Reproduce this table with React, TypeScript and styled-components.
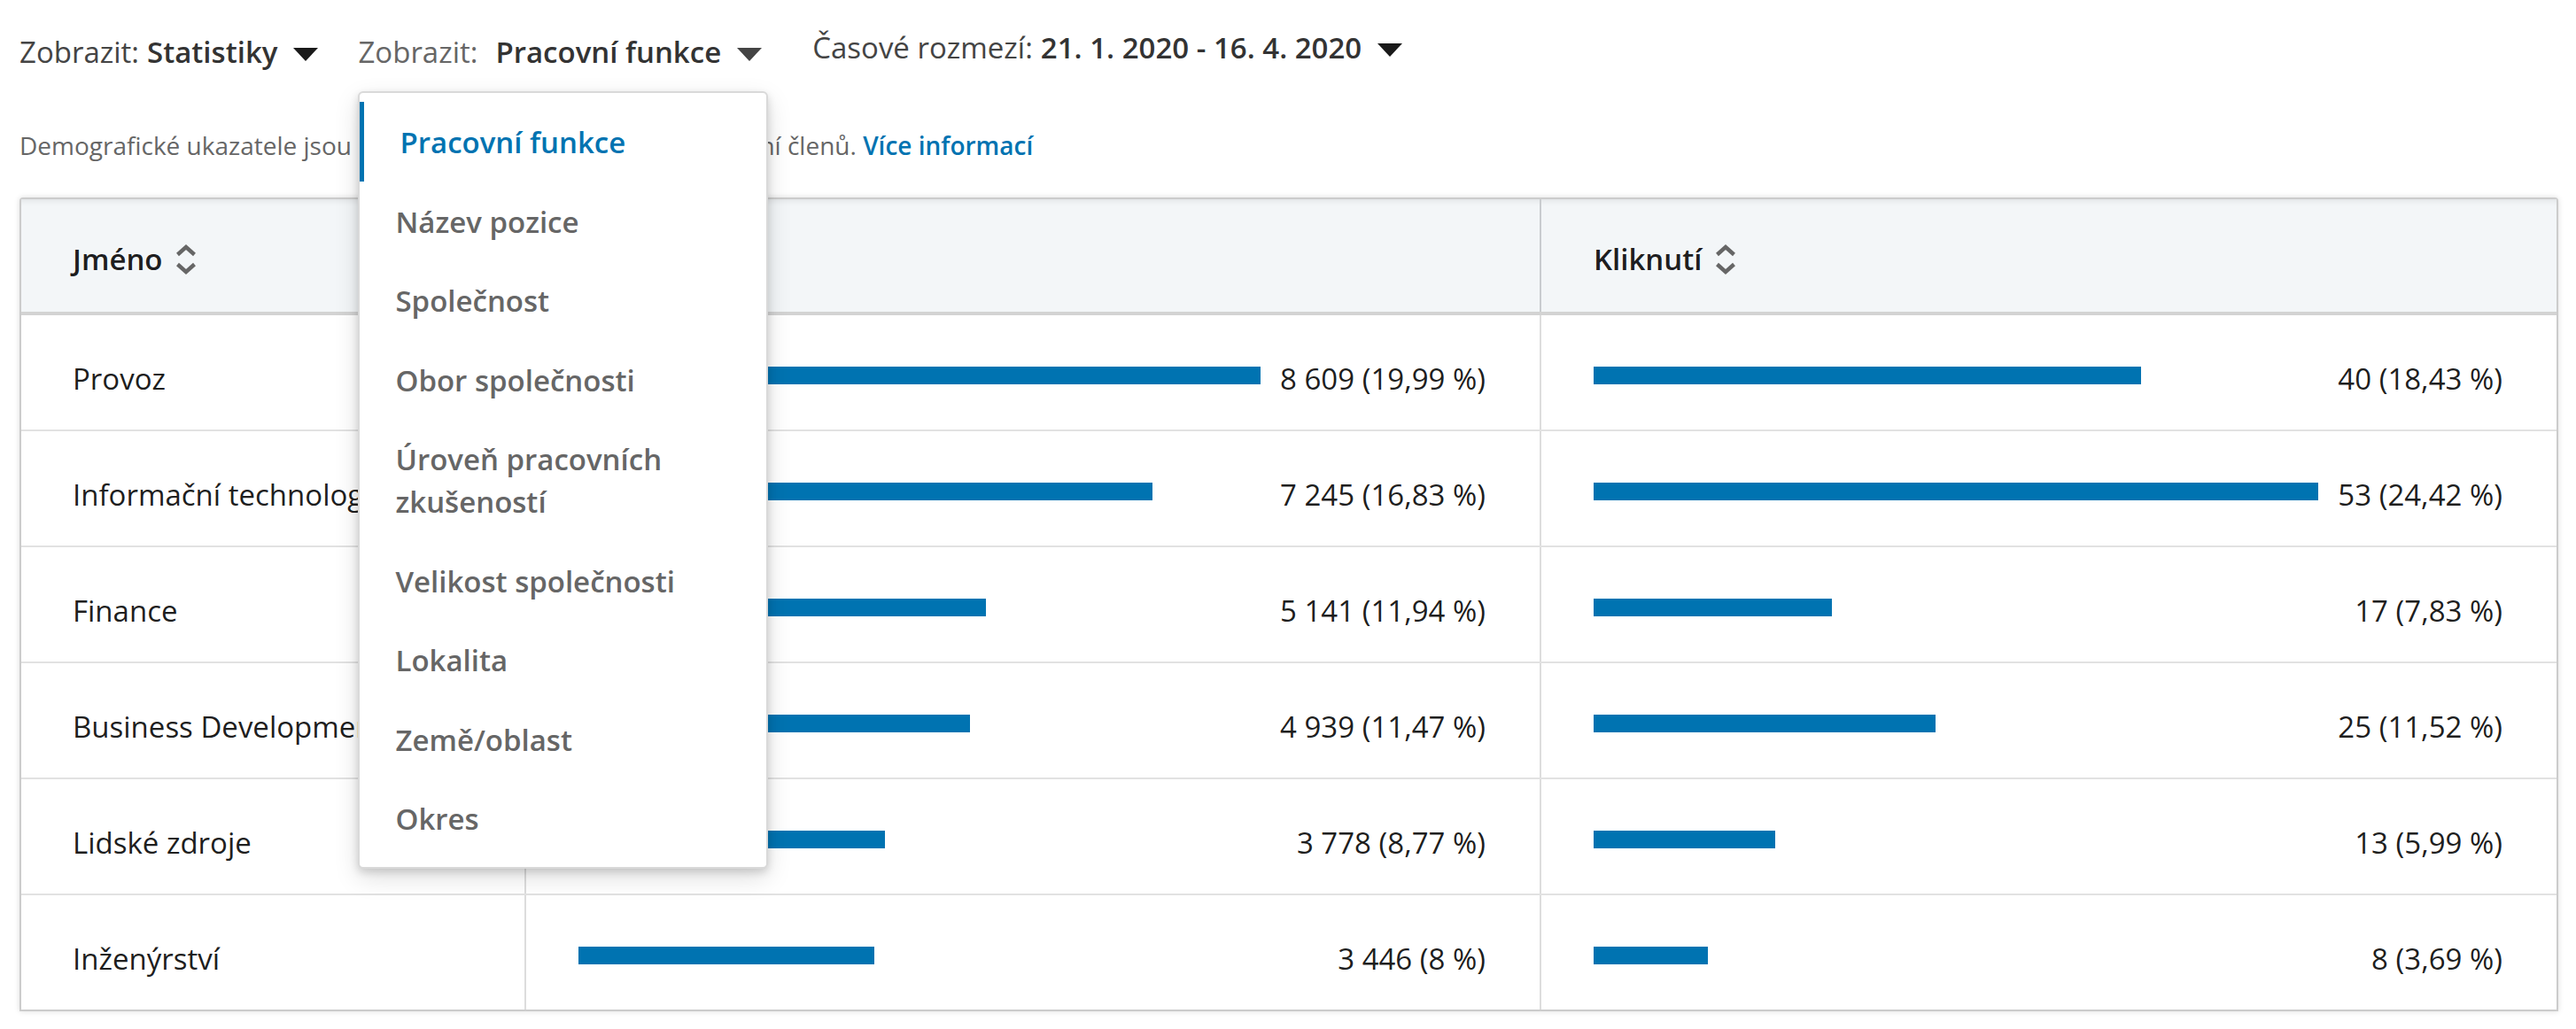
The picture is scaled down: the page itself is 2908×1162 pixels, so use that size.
import React from "react";
import styled, { createGlobalStyle } from "styled-components";

const GlobalStyle = createGlobalStyle`
  html, body { margin: 0; padding: 0; background: #ffffff; }
  body {
    font-family: "Open Sans", "Noto Sans", sans-serif;
    color: rgba(0, 0, 0, 0.9);
    -webkit-font-smoothing: antialiased;
  }
  * { box-sizing: border-box; }
`;

const BLUE = "#0073b1";

const Page = styled.div`
  width: 2908px;
  height: 1162px;
  overflow: hidden;
  padding: 36px 20px 0 22px;
`;

const FilterBar = styled.div`
  display: flex;
  align-items: flex-start;
  gap: 45px;
  height: 46px;
`;

const Filter = styled.div<{ $shift?: number; $raise?: number }>`
  position: relative;
  display: flex;
  align-items: center;
  font-size: 33px;
  line-height: 46px;
  white-space: nowrap;
  margin-left: ${(p) => p.$shift ?? 0}px;
  margin-top: ${(p) => -(p.$raise ?? 0)}px;
  cursor: pointer;
`;

const FilterLabel = styled.span<{ $color: string }>`
  color: ${(p) => p.$color};
  font-weight: 400;
`;

const FilterValue = styled.span<{ $gap: number }>`
  color: #333333;
  font-weight: 600;
  margin-left: ${(p) => p.$gap}px;
`;

const Caret = styled.span<{ $color: string }>`
  display: inline-block;
  width: 0;
  height: 0;
  margin-left: 18px;
  margin-top: 5px;
  border-left: 14px solid transparent;
  border-right: 14px solid transparent;
  border-top: 15px solid ${(p) => p.$color};
`;

const Menu = styled.div`
  position: absolute;
  left: 0;
  top: 67px;
  z-index: 10;
  width: 463px;
  padding: 10px 0;
  background: #ffffff;
  border: 2px solid #d9d9d9;
  border-radius: 6px;
  box-shadow: 0 4px 10px rgba(0, 0, 0, 0.15), 0 10px 28px rgba(0, 0, 0, 0.13);
  white-space: normal;
  cursor: default;
`;

const MenuItem = styled.div<{ $active?: boolean }>`
  font-size: 33px;
  line-height: 48px;
  font-weight: 600;
  padding: 22px 20px 19.5px 40px;
  color: ${(p) => (p.$active ? BLUE : "#666666")};
  border-left: ${(p) => (p.$active ? `5px solid ${BLUE}` : "0 solid transparent")};
`;

const Description = styled.p`
  margin: 62px 0 0 0;
  font-size: 28px;
  line-height: 40px;
  color: #666666;
  white-space: nowrap;
`;

const Link = styled.a`
  color: ${BLUE};
  font-weight: 600;
  text-decoration: none;
`;

const Table = styled.div`
  margin-top: 39px;
  width: 2866px;
  border: 2px solid #cccccc;
  border-radius: 4px 4px 0 0;
  box-shadow: 0 0 6px rgba(0, 0, 0, 0.14);
  background: #ffffff;
`;

const Row = styled.div<{ $head?: boolean; $last?: boolean }>`
  display: grid;
  grid-template-columns: 570px 1146px 1146px;
  height: ${(p) => (p.$head ? 131 : p.$last ? 129 : 131)}px;
  background: ${(p) => (p.$head ? "#f3f6f8" : "#ffffff")};
  border-bottom: ${(p) =>
    p.$head ? "4px solid #d3d3d3" : p.$last ? "none" : "2px solid #e2e2e2"};
  box-shadow: ${(p) => (p.$head ? "inset 0 7px 8px -7px rgba(0,0,0,0.12)" : "none")};
`;

const Cell = styled.div<{ $head?: boolean; $divider?: boolean }>`
  display: flex;
  align-items: center;
  gap: 22px;
  padding: ${(p) => (p.$head ? "9px" : "15px")} 61px 0 58px;
  font-size: 33px;
  line-height: 46px;
  font-weight: ${(p) => (p.$head ? 600 : 400)};
  color: rgba(0, 0, 0, 0.9);
  white-space: nowrap;
  overflow: hidden;
  border-right: ${(p) =>
    p.$divider ? `2px solid ${p.$head ? "#c9cccf" : "#dddddd"}` : "none"};
`;

const MetricCell = styled(Cell)`
  padding-left: 59px;
`;

const HeadLabel = styled.span`
  display: inline-flex;
  align-items: center;
  gap: 13px;
`;

const Track = styled.div`
  flex: 1;
  display: flex;
  align-items: center;
  margin-top: -8px;
`;

const Bar = styled.div`
  height: 20px;
  background: ${BLUE};
`;

const Num = styled.span`
  white-space: nowrap;
`;

const SortIcon = () => (
  <svg width="26" height="36" viewBox="0 0 26 36" fill="none" aria-hidden="true">
    <path d="M3.5 12.5 L13 4 L22.5 12.5" stroke="#666666" strokeWidth="4.4" strokeLinejoin="miter" />
    <path d="M3.5 23.5 L13 32 L22.5 23.5" stroke="#666666" strokeWidth="4.4" strokeLinejoin="miter" />
  </svg>
);

const menuItems = [
  "Pracovní funkce",
  "Název pozice",
  "Společnost",
  "Obor společnosti",
  "Úroveň pracovních zkušeností",
  "Velikost společnosti",
  "Lokalita",
  "Země/oblast",
  "Okres",
];

type RowData = { name: string; views: number; viewsText: string; clicks: number; clicksText: string };

const rows: RowData[] = [
  { name: "Provoz", views: 8609, viewsText: "8\u00a0609 (19,99\u00a0%)", clicks: 40, clicksText: "40 (18,43\u00a0%)" },
  { name: "Informační technologie", views: 7245, viewsText: "7\u00a0245 (16,83\u00a0%)", clicks: 53, clicksText: "53 (24,42\u00a0%)" },
  { name: "Finance", views: 5141, viewsText: "5\u00a0141 (11,94\u00a0%)", clicks: 17, clicksText: "17 (7,83\u00a0%)" },
  { name: "Business Development", views: 4939, viewsText: "4\u00a0939 (11,47\u00a0%)", clicks: 25, clicksText: "25 (11,52\u00a0%)" },
  { name: "Lidské zdroje", views: 3778, viewsText: "3\u00a0778 (8,77\u00a0%)", clicks: 13, clicksText: "13 (5,99\u00a0%)" },
  { name: "Inženýrství", views: 3446, viewsText: "3\u00a0446 (8\u00a0%)", clicks: 8, clicksText: "8 (3,69\u00a0%)" },
];

const maxViews = Math.max(...rows.map((r) => r.views));
const maxClicks = Math.max(...rows.map((r) => r.clicks));

export default function App() {
  return (
    <>
      <GlobalStyle />
      <Page>
        <FilterBar>
          <Filter>
            <FilterLabel $color="#444444">Zobrazit:</FilterLabel>
            <FilterValue $gap={9}>Statistiky</FilterValue>
            <Caret $color="#1a1a1a" />
          </Filter>
          <Filter>
            <FilterLabel $color="#666666">Zobrazit:</FilterLabel>
            <FilterValue $gap={20}>Pracovní funkce</FilterValue>
            <Caret $color="#444444" />
            <Menu>
              {menuItems.map((m, i) => (
                <MenuItem key={m} $active={i === 0}>
                  {m}
                </MenuItem>
              ))}
            </Menu>
          </Filter>
          <Filter $shift={12} $raise={5}>
            <FilterLabel $color="#444444">Časové rozmezí:</FilterLabel>
            <FilterValue $gap={9}>21. 1. 2020 - 16. 4. 2020</FilterValue>
            <Caret $color="#1a1a1a" />
          </Filter>
        </FilterBar>

        <Description>
          Demografické ukazatele jsou k dispozici jen pro placená zobrazení členů.{" "}
          <Link href="#">Více informací</Link>
        </Description>

        <Table>
          <Row $head>
            <Cell $head $divider>
              <HeadLabel>
                Jméno <SortIcon />
              </HeadLabel>
            </Cell>
            <MetricCell $head $divider>
              <HeadLabel>
                Zobrazení <SortIcon />
              </HeadLabel>
            </MetricCell>
            <MetricCell $head>
              <HeadLabel>
                Kliknutí <SortIcon />
              </HeadLabel>
            </MetricCell>
          </Row>
          {rows.map((r, i) => (
            <Row key={r.name} $last={i === rows.length - 1}>
              <Cell $divider>{r.name}</Cell>
              <MetricCell $divider>
                <Track>
                  <Bar style={{ width: `${(r.views / maxViews) * 100}%` }} />
                </Track>
                <Num>{r.viewsText}</Num>
              </MetricCell>
              <MetricCell>
                <Track>
                  <Bar style={{ width: `${(r.clicks / maxClicks) * 100}%` }} />
                </Track>
                <Num>{r.clicksText}</Num>
              </MetricCell>
            </Row>
          ))}
        </Table>
      </Page>
    </>
  );
}
